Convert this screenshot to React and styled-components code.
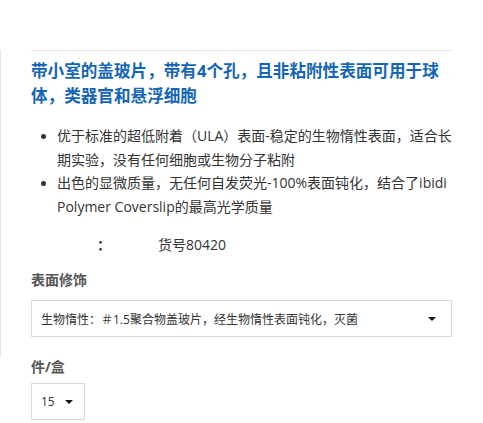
import React from "react";
import styled, { createGlobalStyle } from "styled-components";

const Global = createGlobalStyle`
  html, body { margin: 0; padding: 0; background: #fff; }
  body { font-family: "Open Sans", "Noto Sans CJK SC", sans-serif; color: #333; }
`;

const Page = styled.div`
  padding-top: 50px;
  width: 483px;
`;

const Panel = styled.div`
  border-left: 1px solid #e4e4e4;
  padding: 0 31px 19px 30px;
`;

const Lower = styled.div`
  padding: 0 31px 0 31px;
`;

const Rule = styled.div`
  border-top: 1px solid #e6e6e6;
`;

const Title = styled.h1`
  margin: 6.5px 0 0;
  font-size: 16.6px;
  line-height: 25px;
  font-weight: 700;
  color: #1466b4;
`;

const Bullets = styled.ul`
  margin: 16.5px 0 0;
  padding: 0 0 0 26px;
  list-style: disc;
`;

const Bullet = styled.li`
  font-size: 14px;
  line-height: 23.5px;
  color: #333;
  &::marker { font-size: 13px; color: #333; }
`;

const SkuRow = styled.div`
  margin-top: 17px;
  display: flex;
  font-size: 14px;
  line-height: 20px;
  color: #333;
`;

const SkuLabel = styled.span`
  width: 127px;
  padding-left: 66px;
  box-sizing: border-box;
  font-weight: 700;
`;

const Label = styled.div`
  margin-top: ${(p) => p.$mt}px;
  font-size: 14px;
  line-height: 20px;
  font-weight: 700;
  color: #555;
`;

const SelectBox = styled.div`
  margin-top: ${(p) => p.$mt}px;
  box-sizing: border-box;
  height: 37px;
  width: ${(p) => p.$w || "auto"};
  border: 1px solid #dadada;
  display: flex;
  align-items: center;
  padding: 0 ${(p) => p.$pr}px 0 9px;
  font-size: 12px;
  color: #333;
  gap: ${(p) => p.$gap || 0}px;
`;

const SelectText = styled.span`
  flex: ${(p) => (p.$grow ? 1 : "none")};
  white-space: nowrap;
`;

const Caret = styled.span`
  width: 0;
  height: 0;
  border-left: 4px solid transparent;
  border-right: 4px solid transparent;
  border-top: 4.5px solid #111;
  margin-top: 1px;
`;

export default function App() {
  return (
    <>
      <Global />
      <Page>
        <Panel>
          <Rule />
          <Title>带小室的盖玻片，带有4个孔，且非粘附性表面可用于球体，类器官和悬浮细胞</Title>
          <Bullets>
            <Bullet>优于标准的超低附着（ULA）表面-稳定的生物惰性表面，适合长期实验，没有任何细胞或生物分子粘附</Bullet>
            <Bullet>出色的显微质量，无任何自发荧光-100%表面钝化，结合了ibidi Polymer Coverslip的最高光学质量</Bullet>
          </Bullets>
          <SkuRow>
            <SkuLabel>：</SkuLabel>
            <span>货号80420</span>
          </SkuRow>
          <Label $mt={15}>表面修饰</Label>
          <SelectBox $mt={10} $pr={15}>
            <SelectText $grow>生物惰性：＃1.5聚合物盖玻片，经生物惰性表面钝化，灭菌</SelectText>
            <Caret />
          </SelectBox>
        </Panel>
        <Lower>
          <Label $mt={1}>件/盒</Label>
          <SelectBox $mt={6} $w="54px" $pr={0} $gap={10}>
            <SelectText>15</SelectText>
            <Caret />
          </SelectBox>
        </Lower>
      </Page>
    </>
  );
}
